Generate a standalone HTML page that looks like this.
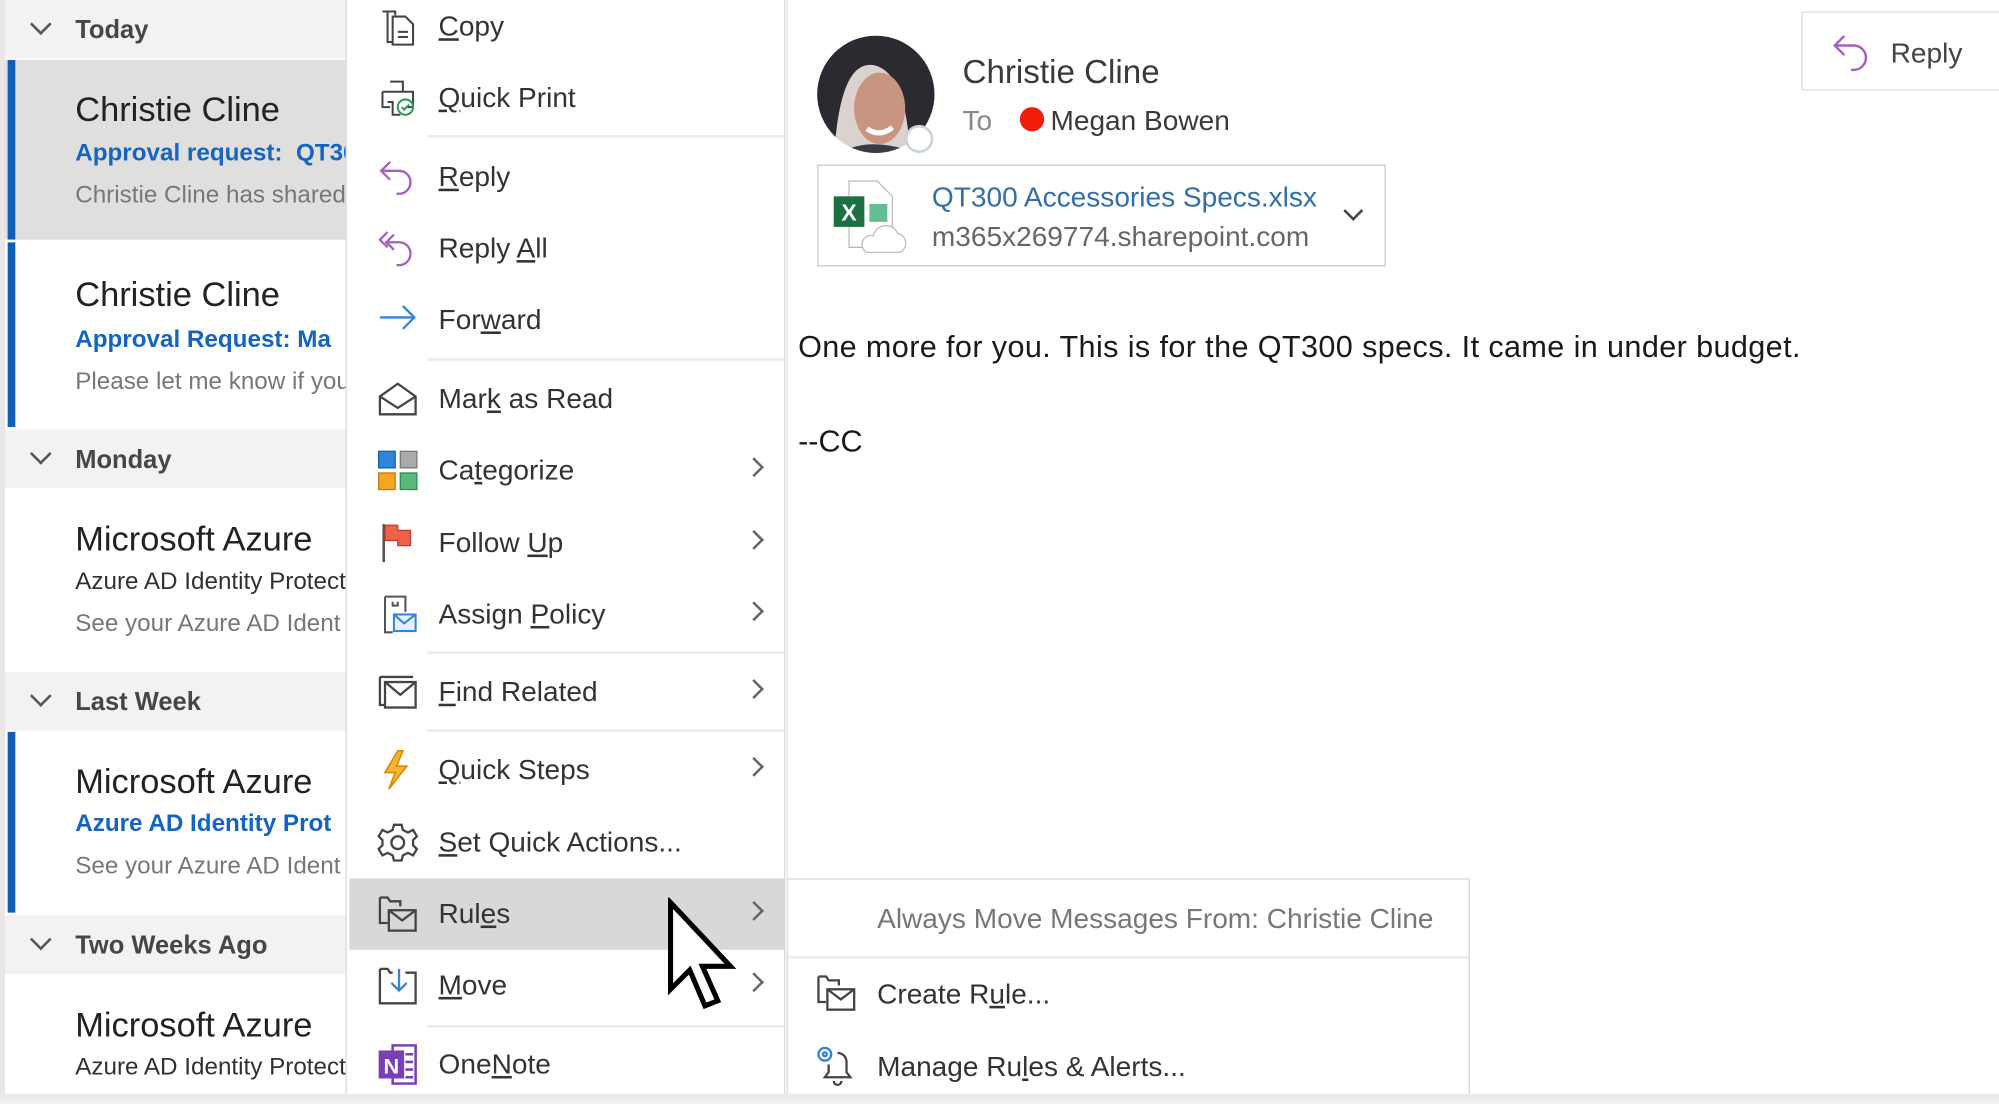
<!DOCTYPE html>
<html><head><meta charset="utf-8"><style>
*{margin:0;padding:0;box-sizing:border-box}
html,body{width:1999px;height:1104px;overflow:hidden;background:#fff}
#w{position:absolute;left:0;top:0;width:1568px;height:866px;transform:scale(1.27487,1.27483);transform-origin:0 0;font-family:"Liberation Sans",sans-serif;background:#fff}
.a{position:absolute;white-space:nowrap}
.hd{position:absolute;left:4px;width:267px;height:46px;background:#f3f2f1}
.hd span{position:absolute;left:55px;top:13px;font-size:20px;font-weight:bold;color:#484644;white-space:nowrap}
.hd i{position:absolute;left:22px;top:13px;width:12px;height:12px;border-right:2px solid #555;border-bottom:2px solid #555;transform:rotate(45deg)}
.it{position:absolute;left:4px;width:267px;background:#fff;overflow:hidden;white-space:nowrap}
.it div{white-space:nowrap}
.bar{position:absolute;left:2px;top:0;bottom:0;width:6px;background:#0f5fb8}
.nm{position:absolute;left:55px;font-size:27px;color:#222}
.sb{position:absolute;left:55px;font-size:19px;font-weight:bold;color:#1465c0}
.sd{position:absolute;left:55px;font-size:19px;color:#323130}
.pv{position:absolute;left:55px;font-size:19px;color:#777}
.mi{position:absolute;left:344px;font-size:22px;color:#333;white-space:nowrap}
.ic{position:absolute;left:296px;width:32px;height:32px}
.ch{position:absolute;left:586px;width:11px;height:11px;border-right:2px solid #666;border-top:2px solid #666;transform:rotate(45deg)}
.sep{position:absolute;left:335px;width:280px;height:2px;background:#eceaea}
</style></head><body><div id="w">
<!-- left list -->
<div class="a" style="left:0;top:0;width:4px;height:866px;background:#e8e6e6"></div>
<div class="a" style="left:140px;top:0;width:70px;height:3px;background:#2b7cd3"></div>
<div class="hd" style="top:0"><i></i><span>Today</span></div>
<div class="it" style="top:47px;height:141px;background:#e1dfdd"><div class="bar"></div>
<div class="nm" style="top:24px">Christie Cline</div><div class="sb" style="top:63px">Approval request:&nbsp; QT300</div><div class="pv" style="top:96px">Christie Cline has shared</div></div>
<div class="it" style="top:190px;height:145px"><div class="bar"></div>
<div class="nm" style="top:26px">Christie Cline</div><div class="sb" style="top:66px">Approval Request: Ma</div><div class="pv" style="top:99px">Please let me know if you</div></div>
<div class="hd" style="top:337px"><i></i><span>Monday</span></div>
<div class="it" style="top:384px;height:142px">
<div class="nm" style="top:24px">Microsoft Azure</div><div class="sd" style="top:62px">Azure AD Identity Protect</div><div class="pv" style="top:95px">See your Azure AD Ident</div></div>
<div class="hd" style="top:527px"><i></i><span>Last Week</span></div>
<div class="it" style="top:574px;height:142px"><div class="bar"></div>
<div class="nm" style="top:24px">Microsoft Azure</div><div class="sb" style="top:62px">Azure AD Identity Prot</div><div class="pv" style="top:95px">See your Azure AD Ident</div></div>
<div class="hd" style="top:718px"><i></i><span>Two Weeks Ago</span></div>
<div class="it" style="top:765px;height:101px">
<div class="nm" style="top:24px">Microsoft Azure</div><div class="sd" style="top:62px">Azure AD Identity Protect</div><div class="pv" style="top:95px">See your Azure AD Ident</div></div>

<!-- context menu -->
<div class="a" style="left:271px;top:0;width:345px;height:866px;background:#fff;border-left:1px solid #d8d8d8;border-right:1px solid #d8d8d8"></div>
<div class="a" style="left:274px;top:689px;width:342px;height:56px;background:#d9d7d7"></div>
<div class="sep" style="top:106px"></div><div class="sep" style="top:281px"></div><div class="sep" style="top:511px"></div><div class="sep" style="top:572px"></div><div class="sep" style="top:804px"></div>

<svg class="ic" style="top:5px" viewBox="0 0 32 32" fill="none" stroke="#444" stroke-width="1.6"><path d="M8 4h6v3M4 4h4v24h4"/><path d="M12 8h10l6 6v16H12z"/><path d="M16 20h8M16 24h8"/></svg>
<div class="mi" style="top:8px"><u>C</u>opy</div>
<svg class="ic" style="top:61px" viewBox="0 0 32 32" fill="none" stroke="#444" stroke-width="1.6"><path d="M10 3h10v8M4 11h24v12h-6M4 11v12h6"/><path d="M8 19h4v10h6"/><circle cx="22" cy="23" r="6" stroke="#2a9d5c"/><path d="M19 23l2 2 4-4" stroke="#2a9d5c"/></svg>
<div class="mi" style="top:64px"><u>Q</u>uick Print</div>
<svg class="ic" style="top:123px" viewBox="0 0 32 32" fill="none" stroke="#a45fc0" stroke-width="1.8"><path d="M10 4L3 11l7 7"/><path d="M3 11h14a9 9 0 0 1 0 18h-2"/></svg>
<div class="mi" style="top:126px"><u>R</u>eply</div>
<svg class="ic" style="top:179px" viewBox="0 0 32 32" fill="none" stroke="#a45fc0" stroke-width="1.8"><path d="M8 3L2 9l6 6"/><path d="M13 5l-6 6 6 6"/><path d="M7 11h10a9 9 0 0 1 0 18h-2"/></svg>
<div class="mi" style="top:182px">Reply <u>A</u>ll</div>
<svg class="ic" style="top:235px" viewBox="0 0 32 32" fill="none" stroke="#2f86d8" stroke-width="1.8"><path d="M2 14h27M20 5l9 9-9 9"/></svg>
<div class="mi" style="top:238px">For<u>w</u>ard</div>
<svg class="ic" style="top:297px" viewBox="0 0 32 32" fill="none" stroke="#444" stroke-width="1.8"><path d="M2 14l14-10 14 10v14H2z"/><path d="M2 14l14 9 14-9"/></svg>
<div class="mi" style="top:300px">Mar<u>k</u> as Read</div>
<svg class="ic" style="top:353px" viewBox="0 0 32 32"><rect x="1" y="1" width="13" height="13" fill="#2f86d8" stroke="#1a5fa8"/><rect x="18" y="1" width="13" height="13" fill="#aaa" stroke="#777"/><rect x="1" y="18" width="13" height="13" fill="#f5a623" stroke="#c77b00"/><rect x="18" y="18" width="13" height="13" fill="#5cb87a" stroke="#2a8d4c"/></svg>
<div class="mi" style="top:356px">Ca<u>t</u>egorize</div><div class="ch" style="top:361px"></div>
<svg class="ic" style="top:409px" viewBox="0 0 32 32"><path d="M5 2v30" stroke="#555" stroke-width="2"/><path d="M6 3h10v4h10v12H16v-4H6z" fill="#f0604a" stroke="#c03a2a"/></svg>
<div class="mi" style="top:413px">Follow <u>U</u>p</div><div class="ch" style="top:418px"></div>
<svg class="ic" style="top:466px" viewBox="0 0 32 32" fill="none" stroke="#555" stroke-width="1.6"><path d="M6 2h16v12M6 2v28h6"/><path d="M12 6v3h4V6"/><rect x="13" y="16" width="17" height="13" stroke="#2f86d8" fill="#e6f1fb"/><path d="M13 16l8 7 9-7" stroke="#2f86d8"/></svg>
<div class="mi" style="top:469px">Assign <u>P</u>olicy</div><div class="ch" style="top:474px"></div>
<svg class="ic" style="top:527px" viewBox="0 0 32 32" fill="none" stroke="#444" stroke-width="1.8"><path d="M2 4h26M2 4v22h4"/><rect x="6" y="8" width="24" height="20"/><path d="M6 8l12 10 12-10"/></svg>
<div class="mi" style="top:530px"><u>F</u>ind Related</div><div class="ch" style="top:535px"></div>
<svg class="ic" style="top:588px" viewBox="0 0 32 32"><path d="M16 1L6 18h8l-5 13 14-18h-8l5-12z" fill="#f7b733" stroke="#e08600" stroke-width="1.3"/></svg>
<div class="mi" style="top:591px"><u>Q</u>uick Steps</div><div class="ch" style="top:596px"></div>
<svg class="ic" style="top:645px" viewBox="0 0 32 32" fill="none" stroke="#444" stroke-width="1.8"><path d="M13 2h6l1 4 4 2 4-2 3 5-3 3v4l3 3-3 5-4-2-4 2-1 4h-6l-1-4-4-2-4 2-3-5 3-3v-4L1 11l3-5 4 2 4-2z"/><circle cx="16" cy="16" r="5"/></svg>
<div class="mi" style="top:648px"><u>S</u>et Quick Actions...</div>
<svg class="ic" style="top:701px" viewBox="0 0 32 32" fill="none" stroke="#444" stroke-width="1.8"><path d="M2 3h6l2 3h8v4M2 3v20h6"/><rect x="9" y="13" width="21" height="16"/><path d="M9 13l10.5 8L30 13"/></svg>
<div class="mi" style="top:704px">Rul<u>e</u>s</div><div class="ch" style="top:709px"></div>
<svg class="ic" style="top:757px" viewBox="0 0 32 32" fill="none" stroke="#444" stroke-width="1.8"><path d="M2 3h6l2 3h2M2 3v27h28V6h-8"/><path d="M17 3v16M11 14l6 6 6-6" stroke="#2f86d8"/></svg>
<div class="mi" style="top:760px"><u>M</u>ove</div><div class="ch" style="top:765px"></div>
<svg class="ic" style="top:819px" viewBox="0 0 32 32"><rect x="12" y="1" width="18" height="30" fill="#fff" stroke="#7b3fb5" stroke-width="2"/><path d="M22 8h6M22 14h6M22 20h6M22 26h6" stroke="#7b3fb5" stroke-width="2"/><rect x="1" y="5" width="20" height="22" fill="#7b3fb5"/><text x="11" y="23" font-family="Liberation Sans" font-weight="bold" font-size="17" fill="#fff" text-anchor="middle">N</text></svg>
<div class="mi" style="top:822px">One<u>N</u>ote</div>

<!-- reading pane -->
<div class="a" style="left:617px;top:0;width:1px;height:690px;background:#e2e2e2"></div>
<svg class="a" style="left:640px;top:27px" width="96" height="96" viewBox="0 0 96 96"><defs><clipPath id="c"><circle cx="47" cy="47" r="46"/></clipPath></defs><g clip-path="url(#c)"><rect width="96" height="96" fill="#d9d2cf"/><path d="M0 0h96v96H74C72 55 64 28 45 24 28 22 18 42 14 96H0z" fill="#2a2a30"/><ellipse cx="50" cy="58" rx="20" ry="28" fill="#c99580"/><path d="M40 74q10 7 20-1" stroke="#fff" stroke-width="4" fill="none"/><path d="M14 96q22-16 56-6v6z" fill="#3a3a44"/></g><circle cx="81" cy="82" r="10" fill="#fff" stroke="#c8d3dc" stroke-width="2"/></svg>
<div class="a" style="left:755px;top:41px;font-size:26px;color:#3b3a39">Christie Cline</div>
<div class="a" style="left:755px;top:82px;font-size:22px;color:#888">To</div>
<div class="a" style="left:800px;top:84px;width:19px;height:19px;border-radius:50%;background:#f21c0d"></div>
<div class="a" style="left:824px;top:82px;font-size:22px;color:#3b3a39">Megan Bowen</div>
<div class="a" style="left:641px;top:129px;width:446px;height:80px;border:1px solid #c8c8c8;background:#fff"></div>
<svg class="a" style="left:652px;top:140px" width="62" height="64" viewBox="0 0 62 64"><path d="M14 2h22l12 12v40H14z" fill="#fff" stroke="#bbb"/><rect x="2" y="14" width="24" height="24" fill="#1d7044"/><text x="14" y="33" font-family="Liberation Sans" font-weight="bold" font-size="18" fill="#fff" text-anchor="middle">X</text><path d="M30 20h14v14H30z" fill="#21a366" opacity=".7"/><path d="M28 58h26a8 8 0 0 0-2-15 10 10 0 0 0-19 2 7 7 0 0 0-5 13z" fill="#fff" stroke="#bbb"/></svg>
<div class="a" style="left:731px;top:142px;font-size:22px;color:#2e6fac">QT300 Accessories Specs.xlsx</div>
<div class="a" style="left:731px;top:173px;font-size:22px;color:#666">m365x269774.sharepoint.com</div>
<div class="a" style="left:1056px;top:160px;width:11px;height:11px;border-right:2px solid #444;border-bottom:2px solid #444;transform:rotate(45deg)"></div>
<div class="a" style="left:1413px;top:9px;width:160px;height:62px;border:1px solid #ddd;background:#fff"></div>
<svg class="a" style="left:1436px;top:24px" width="34" height="34" viewBox="0 0 32 32" fill="none" stroke="#a45fc0" stroke-width="1.8"><path d="M10 4L3 11l7 7"/><path d="M3 11h14a9 9 0 0 1 0 18h-2"/></svg>
<div class="a" style="left:1483px;top:29px;font-size:22px;color:#444">Reply</div>
<div class="a" style="left:626px;top:259px;font-size:24px;color:#1a1a1a;letter-spacing:0.3px">One more for you. This is for the QT300 specs. It came in under budget.</div>
<div class="a" style="left:626px;top:333px;font-size:24px;color:#1a1a1a">--CC</div>

<!-- submenu -->
<div class="a" style="left:617px;top:689px;width:536px;height:177px;background:#fff;border:1px solid #d8d8d8"></div>
<div class="a" style="left:618px;top:750px;width:534px;height:2px;background:#ececec"></div>
<div class="a" style="left:688px;top:708px;font-size:22px;color:#777">Always Move Messages From: Christie Cline</div>
<svg class="a" style="left:640px;top:763px" width="32" height="32" viewBox="0 0 32 32" fill="none" stroke="#444" stroke-width="1.8"><path d="M2 3h6l2 3h8v4M2 3v20h6"/><rect x="9" y="13" width="21" height="16"/><path d="M9 13l10.5 8L30 13"/></svg>
<div class="a" style="left:688px;top:767px;font-size:22px;color:#333">Create R<u>u</u>le...</div>
<svg class="a" style="left:638px;top:818px" width="34" height="34" viewBox="0 0 34 34" fill="none" stroke-width="1.8"><circle cx="9" cy="9" r="5" stroke="#2f86d8"/><circle cx="9" cy="9" r="1.5" stroke="#2f86d8"/><path d="M19 8a7 7 0 0 1 7 7v8l3 4H9l3-4v-6M16 30a3 3 0 0 0 6 0" stroke="#444"/></svg>
<div class="a" style="left:688px;top:824px;font-size:22px;color:#333">Manage Ru<u>l</u>es &amp; Alerts...</div>

<div class="a" style="left:0;top:858px;width:1568px;height:8px;background:linear-gradient(#e8e8e8,#f4f4f4)"></div>

<!-- cursor -->
<svg class="a" style="left:522px;top:704px" width="60" height="92" viewBox="0 0 60 92"><path d="M4 4v68l15-15 12 28 10-4-12-27h22z" fill="#fff" stroke="#000" stroke-width="4" stroke-linejoin="miter"/></svg>
</div></body></html>
